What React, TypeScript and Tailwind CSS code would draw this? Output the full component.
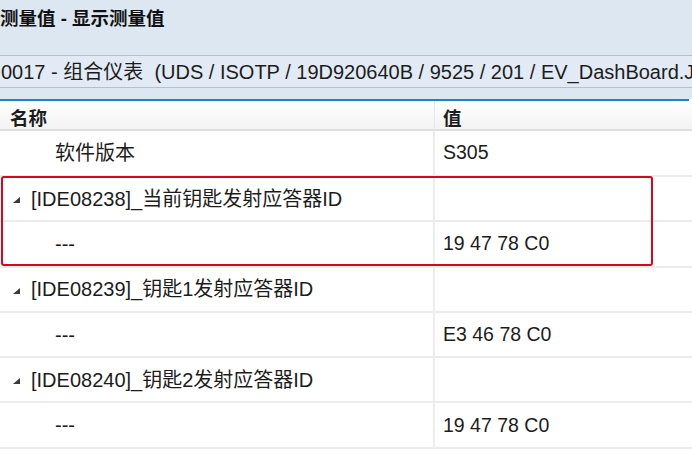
import React from "react";

const font = { fontFamily: '"Liberation Sans", Arial, "Noto Sans CJK SC", sans-serif' };

function Tri() {
  return (
    <svg width="7" height="6" viewBox="0 0 7 6" className="shrink-0">
      <polygon points="7,0 7,6 0,6" fill="#3a3a3a" />
    </svg>
  );
}

type Row = { name: string; value: string; parent?: boolean; first?: boolean };

const rows: Row[] = [
  { name: "软件版本", value: "S305", first: true },
  { name: "[IDE08238]_当前钥匙发射应答器ID", value: "", parent: true },
  { name: "---", value: "19 47 78 C0" },
  { name: "[IDE08239]_钥匙1发射应答器ID", value: "", parent: true },
  { name: "---", value: "E3 46 78 C0" },
  { name: "[IDE08240]_钥匙2发射应答器ID", value: "", parent: true },
  { name: "---", value: "19 47 78 C0" },
];

export default function App() {
  return (
    <div
      className="relative w-[692px] h-[451px] overflow-hidden bg-white text-[#1c1c1c]"
      style={font}
    >
      <div className="h-[55px] bg-[#dde7f2] pt-[7px]">
        <div className="text-[18.5px] leading-[24px] font-bold whitespace-nowrap text-[#111]">
          测量值 - 显示测量值
        </div>
      </div>
      <div className="h-[33px] border-y border-[#b7c0c9] bg-[#e2ebf5] flex items-center overflow-hidden">
        <div className="text-[20px] leading-[24px] whitespace-nowrap pl-[1px]">
          0017 - 组合仪表&nbsp; (UDS / ISOTP / 19D920640B / 9525 / 201 / EV_DashBoard.J
        </div>
      </div>
      <div className="h-[11px] bg-[#dde7f2]" />
      <div className="h-[2px] bg-[#1b86cc] mr-[3px]" />
      <div className="flex h-[30px] border-b-2 border-[#dedede] bg-gradient-to-b from-white to-[#f3f3f3]">
        <div className="w-[435px] pl-[10px] pt-[6px] text-[18.5px] leading-[24px] font-bold border-r border-[#e6e6e6]">
          名称
        </div>
        <div className="flex-1 pl-[8px] pt-[6px] text-[18.5px] leading-[24px] font-bold">
          值
        </div>
      </div>
      {rows.map((r, i) => (
        <div
          key={i}
          className={`flex border-b-2 border-[#ececec] ${r.first ? "h-[46px]" : "h-[45.3px]"}`}
        >
          <div className="w-[435px] flex items-center border-r-2 border-[#ececec] text-[20px] whitespace-nowrap">
            {r.parent ? (
              <>
                <div className="w-[31px] flex justify-end pr-[11px] pt-[3px]">
                  <Tri />
                </div>
                <span>{r.name}</span>
              </>
            ) : (
              <span className="pl-[55px]">{r.name}</span>
            )}
          </div>
          <div className="flex-1 flex items-center pl-[8px] text-[19.5px] whitespace-nowrap">
            {r.value}
          </div>
        </div>
      ))}
      <div className="absolute left-[1px] top-[176px] w-[652px] h-[90px] border-2 border-[#d5061f] rounded-[3px] pointer-events-none" />
    </div>
  );
}
